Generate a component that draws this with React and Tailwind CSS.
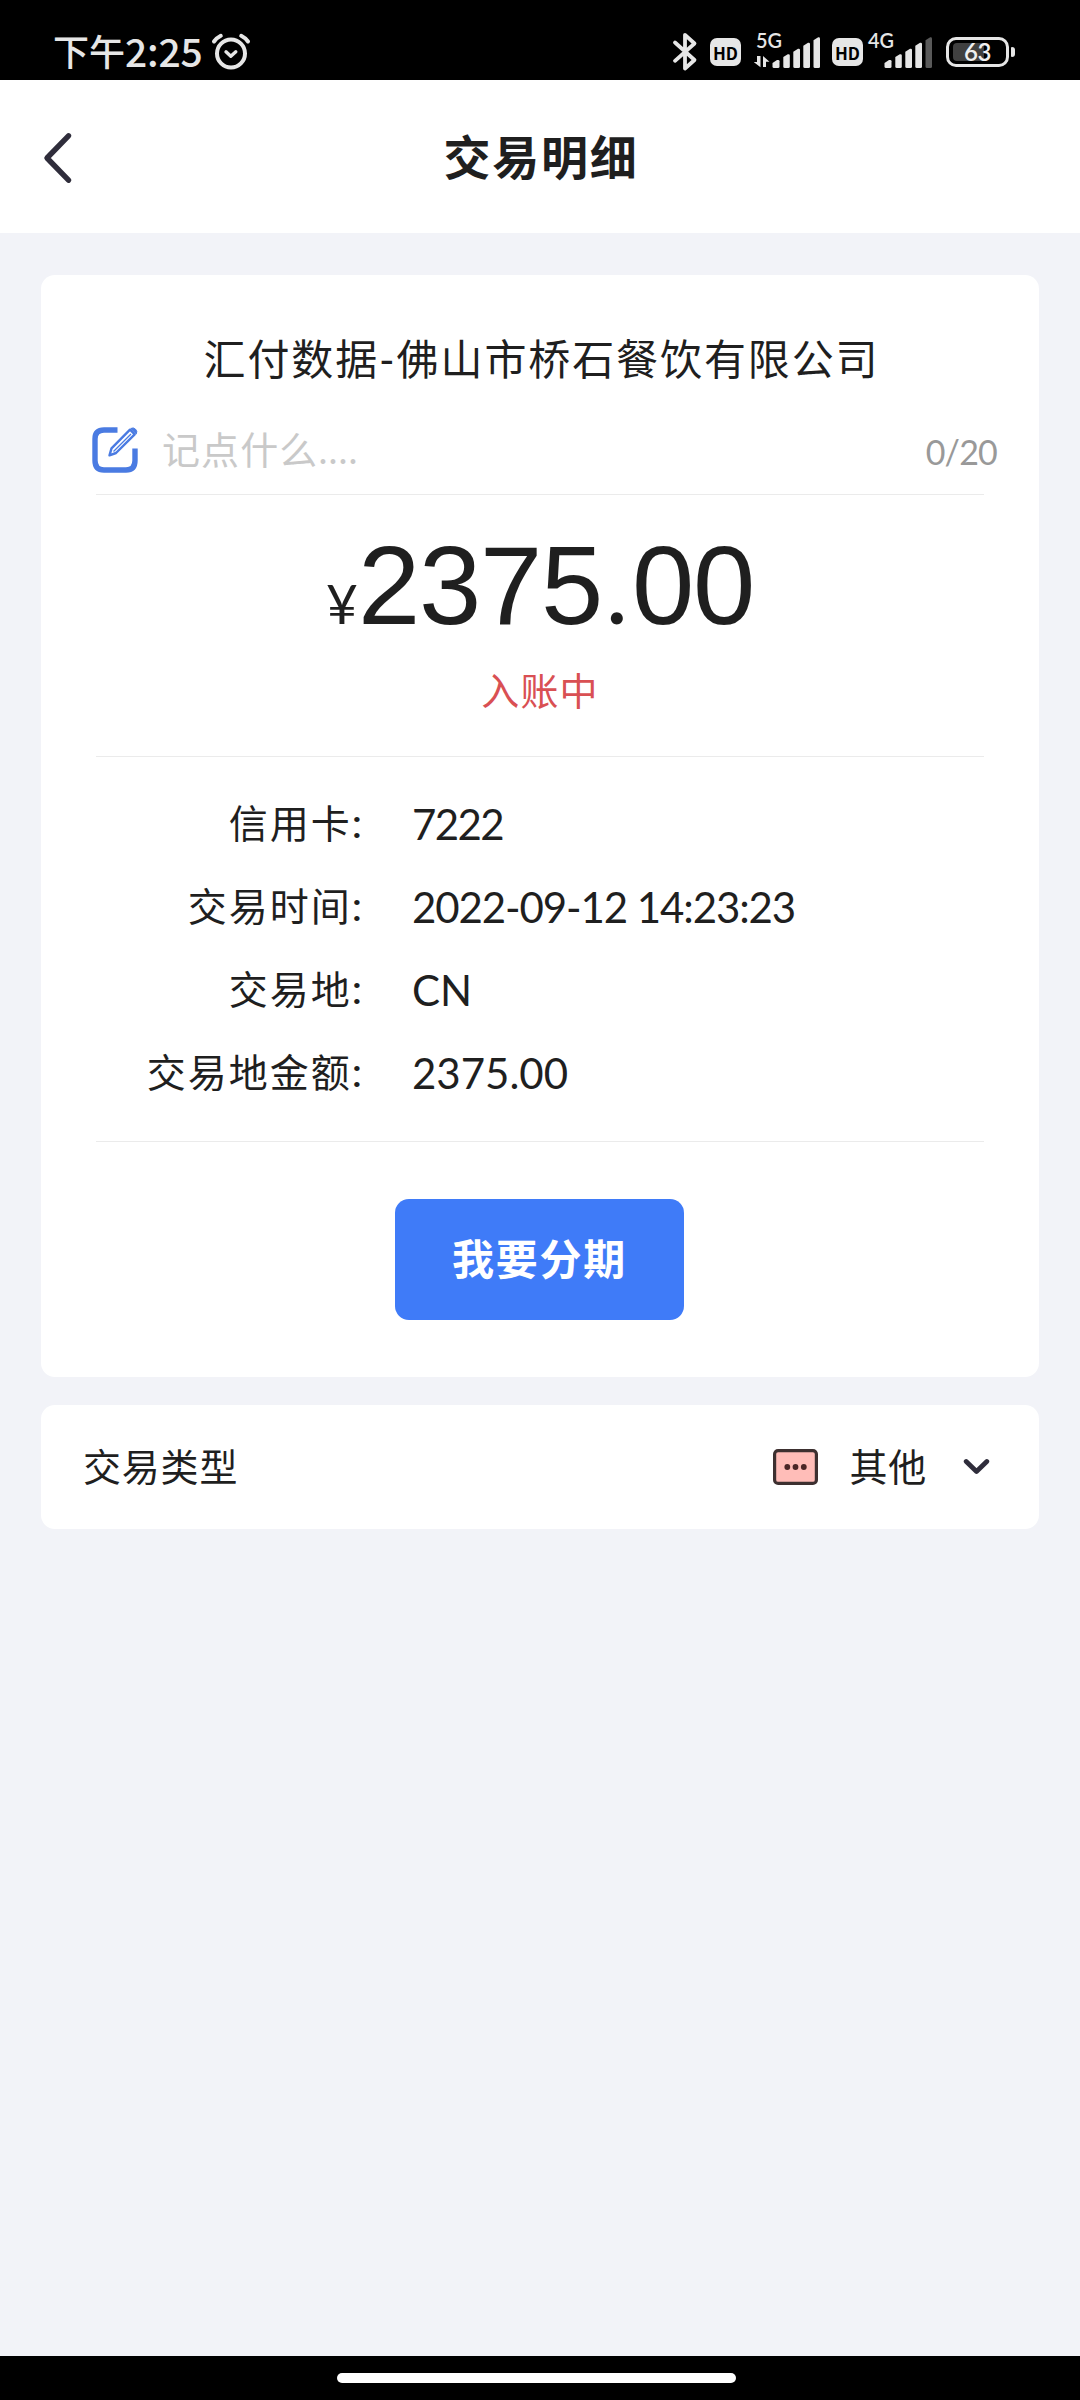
import React from "react";

const details = [
  { label: "信用卡", value: "7222", tracking: "tracking-[-1.6px]" },
  { label: "交易时间", value: "2022-09-12 14:23:23", tracking: "tracking-[-1.1px]" },
  { label: "交易地", value: "CN", tracking: "tracking-[0px]" },
  { label: "交易地金额", value: "2375.00", tracking: "tracking-[0px]" },
];

function AlarmIcon() {
  return (
    <svg className="ml-[8px] mt-[33px] h-[38px] w-[40px] shrink-0" viewBox="0 0 40 38" fill="none" stroke="#e6e6e6" strokeLinecap="round" strokeLinejoin="round">
      <circle cx="20" cy="20.5" r="14" strokeWidth="4" />
      <path d="M15 18.8l4.8 4.4 5-4.4" strokeWidth="3.4" />
      <path d="M3 8.5Q5.5 5 9.8 2.8M37 8.5Q34.500 5 30.200 2.800" strokeWidth="4" />
    </svg>
  );
}

function BluetoothIcon() {
  return (
    <svg className="mt-[32px] h-[40px] w-[26px] shrink-0" viewBox="0 0 26 40" fill="none" stroke="#e6e6e6" strokeWidth="3.8" strokeLinecap="round" strokeLinejoin="round">
      <path d="M3 10.500L22.500 28 13 36.500V2.800L22.500 11.500 3 28.800" />
    </svg>
  );
}

function HdBadge({ className }) {
  return (
    <div className={`mt-[38px] flex h-[28px] w-[31px] shrink-0 items-center justify-center rounded-[7px] bg-[#e6e6e6] font-['Noto_Sans_CJK_SC'] text-[17px] font-bold leading-none text-black ${className}`}>
      HD
    </div>
  );
}

function Signal({ label, arrows, lastDim, className }) {
  return (
    <svg className={`mt-[20px] h-[50px] w-[68px] shrink-0 ${className}`} viewBox="0 -10 68 50" fill="#e6e6e6">
      <text x="2" y="18" fontSize="21" fontWeight="600" textLength="26" lengthAdjust="spacingAndGlyphs">
        {label}
      </text>
      {arrows && <path d="M6.500 26v11.200L-.5 32h3.500V26zM9 37V26l6.500 5.800h-3.500V37z" />}
      <path d="M18.500 36.500v-3.500l4.500-3h1.200q1.300 0 1.300 1.300v5.200q0 1.500-1.500 1.500h-4q-1.500 0-1.500-1.500z" />
      <path d="M29.300 36.500v-9.500l4.500-2.800h.8q1.200 0 1.200 1.300v11q0 1.500-1.500 1.500h-3.500q-1.500 0-1.500-1.500z" />
      <path d="M39.300 36.500v-14.800l4.700-3h.7q1.300 0 1.300 1.300v16.500q0 1.500-1.500 1.500h-3.700q-1.500 0-1.500-1.500z" />
      <path d="M49.300 36.500v-20.800l4.700-3h.7q1.300 0 1.300 1.300v22.500q0 1.500-1.500 1.500h-3.700q-1.500 0-1.500-1.500z" />
      <path fill={lastDim ? "#595959" : "#e6e6e6"} d="M59.500 36.500v-26.300l4.700-3h.5q1.300 0 1.300 1.300v28q0 1.500-1.500 1.500h-3.500q-1.500 0-1.500-1.500z" />
    </svg>
  );
}

function Battery() {
  return (
    <div className="ml-[12px] mt-[37px] flex h-[30px] items-center">
      <div className="relative flex h-[30px] w-[63px] items-center justify-center rounded-[10px] border-[3px] border-[#e6e6e6]">
        <div className="absolute left-[4px] top-[3px] h-[18px] w-[31px] rounded-[4px] bg-[#404040]" />
        <span className="relative text-[24px] font-semibold leading-none tracking-[-0.5px] text-[#f0f0f0]">63</span>
      </div>
      <div className="ml-[2px] h-[10px] w-[4px] rounded-r-[3px] rounded-l-[1px] bg-[#e6e6e6]" />
    </div>
  );
}

function StatusBar() {
  return (
    <div className="flex h-[80px] items-start bg-black pl-[53px] pr-[65px] text-[#e6e6e6]">
      <div className="mt-[25px] flex h-[50px] items-center font-['Noto_Sans_CJK_SC'] font-medium leading-[50px]">
        <span className="text-[36px]">下午</span>
        <span className="text-[39px] tracking-[-0.2px]">2:25</span>
      </div>
      <AlarmIcon />
      <div className="ml-auto flex items-start">
        <BluetoothIcon />
        <HdBadge className="ml-[12px]" />
        <Signal label="5G" arrows className="ml-[13px]" />
        <HdBadge className="ml-[10px]" />
        <Signal label="4G" lastDim className="ml-[3px]" />
        <Battery />
      </div>
    </div>
  );
}

function Header() {
  return (
    <header className="grid h-[153px] grid-cols-[200px_1fr_200px] items-center bg-white">
      <svg className="ml-[43px] mt-[2px] h-[54px] w-[32px]" viewBox="0 0 32 54" fill="none" stroke="#2f2d3b" strokeWidth="5.4" strokeLinecap="round" strokeLinejoin="round">
        <path d="M25.500 4.800L4 27l21.500 22.200" />
      </svg>
      <h1 className="pl-[2px] text-center text-[47px] font-bold leading-[60px] tracking-[1.800px]">交易明细</h1>
    </header>
  );
}

function EditIcon() {
  return (
    <svg className="h-[46px] w-[46px] shrink-0" viewBox="0 0 46 46" fill="none" stroke="#4a7be2">
      <path d="M25.500 3H12Q3 3 3 12v21.500q0 9.500 9 9.500h22q9 0 9-9.500V21.500" strokeWidth="5.400" />
      <path d="M17.500 28.300l2-7L38 2.700l4.700 4.600L24 26z" strokeWidth="2.400" strokeLinejoin="round" />
      <path d="M21.500 24.500L39 7" strokeWidth="1.200" />
      <path d="M38.800 1.500q2.500-1.500 4.700.7t.8 4.700z" fill="#4a7be2" strokeWidth="1" />
    </svg>
  );
}

function Divider() {
  return <div className="mx-[55px] h-px bg-[#ebebeb]" />;
}

function TransactionCard() {
  return (
    <section className="mx-[41px] mt-[42px] h-[1102px] rounded-[14px] bg-white">
      <h2 className="pl-[3px] pt-[54px] text-center text-[42px] leading-[60px] tracking-[1.900px]">汇付数据-佛山市桥石餐饮有限公司</h2>
      <div className="mt-[30px] flex h-[62px] items-center pl-[51px] pr-[42px]">
        <EditIcon />
        <span className="-mt-[2px] ml-[24px] text-[38px] leading-none tracking-[1.100px] text-[#c9c9c9]">记点什么....</span>
        <span className="ml-auto mt-[4px] text-[34px] leading-none tracking-[-0.8px] text-[#999]">0/20</span>
      </div>
      <div className="mt-[13px]">
        <Divider />
      </div>
      <div className="flex h-[130px] items-baseline justify-center pt-[26px] leading-[130px]">
        <span className="text-[55px]">¥</span>
        <span className="flex items-baseline font-['Liberation_Sans'] text-[112px] tracking-[-1.300px]">
          2375
          <span className="w-[30px] text-center font-['Lato'] text-[96px] tracking-normal">.</span>
          00
        </span>
      </div>
      <p className="mt-[35px] text-center text-[38px] leading-[60px] tracking-[1.200px] text-[#d95053]">入账中</p>
      <div className="mt-[36px]">
        <Divider />
      </div>
      <dl className="mt-[25px]">
        {details.map((d) => (
          <div key={d.label} className="flex h-[83px] items-center text-[39px] leading-[60px]">
            <dt className="w-[324px] text-right tracking-[2px]">
              {d.label}
              <span className="mr-[1px] font-['Roboto'] font-medium">:</span>
            </dt>
            <dd className={`ml-[47px] text-[42px] ${d.tracking}`}>{d.value}</dd>
          </div>
        ))}
      </dl>
      <div className="mt-[27px]">
        <Divider />
      </div>
      <button className="ml-[354px] mt-[57px] flex h-[121px] w-[289px] items-center justify-center rounded-[14px] bg-[#3f7bf8] pb-[1px] text-[42px] font-bold leading-none tracking-[1.800px] text-white">
        我要分期
      </button>
    </section>
  );
}

function TypeRow() {
  return (
    <section className="mx-[41px] mt-[28px] flex h-[124px] items-center rounded-[14px] bg-white pl-[42px] pr-[49px] text-[38px] leading-none tracking-[0.800px]">
      <span className="-mt-[2px]">交易类型</span>
      <svg className="ml-auto h-[36px] w-[45px]" viewBox="0 0 45 36">
        <rect x="1.600" y="1.600" width="41.800" height="32.800" rx="3.500" fill="#ffbdb8" stroke="#3d3030" strokeWidth="3.200" />
        <g fill="#4a2626">
          <circle cx="14.300" cy="18" r="2.900" />
          <circle cx="22.500" cy="18" r="2.900" />
          <circle cx="30.800" cy="18" r="2.900" />
        </g>
      </svg>
      <span className="-mt-[2px] ml-[31px]">其他</span>
      <svg className="ml-[36px] h-[18px] w-[27px]" viewBox="0 0 27 18" fill="none" stroke="#2f2d3b" strokeWidth="4.800" strokeLinecap="round" strokeLinejoin="round">
        <path d="M3.200 3.500l10.300 10 10.300-10" />
      </svg>
    </section>
  );
}

export default function App() {
  return (
    <div className="flex h-[2400px] w-[1080px] flex-col overflow-hidden bg-[#f2f3f8] font-['Lato','Noto_Sans_CJK_SC',sans-serif] text-[#1f1f1f]">
      <StatusBar />
      <Header />
      <main className="flex-1">
        <TransactionCard />
        <TypeRow />
      </main>
      <div className="flex h-[44px] items-start justify-center bg-black pt-[17px]">
        <div className="mr-[7px] h-[10px] w-[399px] rounded-full bg-white" />
      </div>
    </div>
  );
}
